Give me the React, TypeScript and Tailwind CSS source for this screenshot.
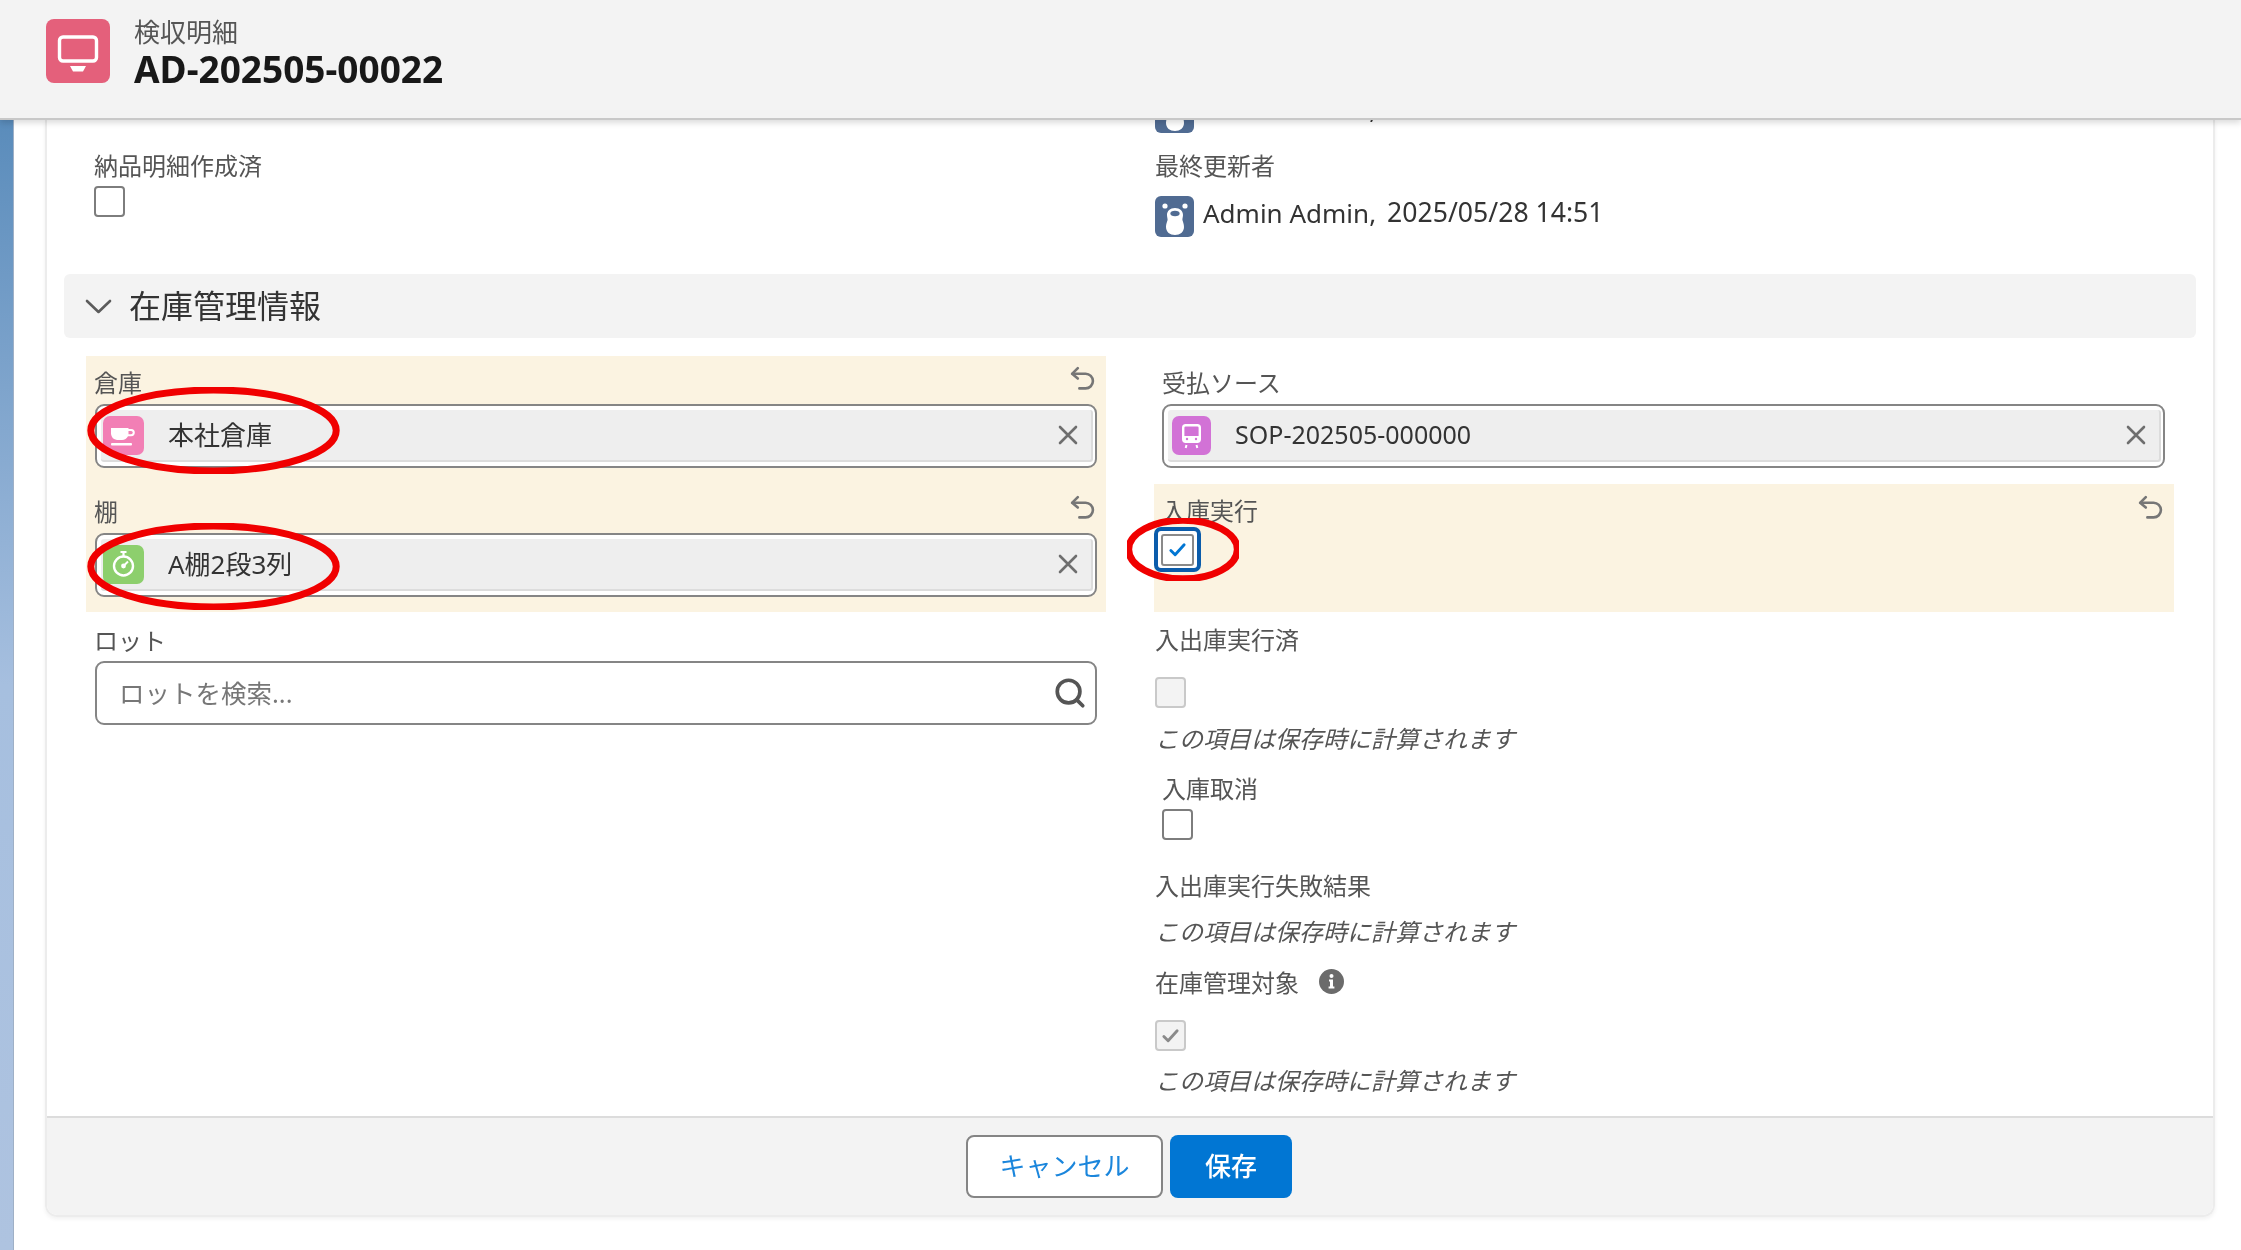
import React from "react";
import { Search } from "lucide-react";

const UndoIcon = () => (
  <svg viewBox="0 0 24 24" className="w-[25px] h-[25px]" fill="none" stroke="#767676" strokeWidth="2.5" strokeLinecap="round" strokeLinejoin="round">
    <path d="M7.5 2 2 7.5 7.5 12" />
    <path d="M2.5 7.5H15a6.5 6.5 0 0 1 0 14H9" />
  </svg>
);

const ClearIcon = () => (
  <svg viewBox="0 0 20 20" className="w-[20px] h-[20px] shrink-0" fill="none" stroke="#6e6e6e" strokeWidth="2.6" strokeLinecap="round">
    <path d="M2 2 18 18M18 2 2 18" />
  </svg>
);

const CupIcon = () => (
  <svg viewBox="0 0 41 39" className="w-[41px] h-[39px] shrink-0">
    <rect width="41" height="39" rx="7" fill="#f27fb5" />
    <path d="M8 12h17.5v1h2.7a3.6 3.6 0 0 1 0 7.2H25A7 7 0 0 1 19 24h-5a7 7 0 0 1-6-6Z" fill="#fff" />
    <path d="M25.5 15v3.2h2.6a1.6 1.6 0 0 0 0-3.2Z" fill="#f27fb5" />
    <rect x="8" y="27" width="21" height="2.4" rx="1" fill="#fff" />
  </svg>
);

const TimerIcon = () => (
  <svg viewBox="0 0 41 39" className="w-[41px] h-[39px] shrink-0">
    <rect width="41" height="39" rx="7" fill="#8dcf6d" />
    <circle cx="20.5" cy="21" r="9.5" fill="none" stroke="#fff" strokeWidth="2.4" />
    <circle cx="20.5" cy="21" r="2.4" fill="#fff" />
    <path d="M20.5 21 25 16.5" stroke="#fff" strokeWidth="2" />
    <path d="M20.5 7v4M17.5 7h6" stroke="#fff" strokeWidth="2.2" />
  </svg>
);

const TrainIcon = () => (
  <svg viewBox="0 0 39 39" className="ml-[2px] w-[39px] h-[39px] shrink-0">
    <rect width="39" height="39" rx="7" fill="#d272d6" />
    <rect x="11.2" y="9.2" width="16.6" height="16.6" rx="2.5" fill="none" stroke="#fff" strokeWidth="2.4" />
    <rect x="11" y="20" width="17" height="6" fill="#fff" />
    <circle cx="15" cy="23" r="1.2" fill="#d272d6" />
    <circle cx="24" cy="23" r="1.2" fill="#d272d6" />
    <path d="M14.5 29l-.8 3M24.5 29l.8 3" stroke="#fff" strokeWidth="2" />
  </svg>
);

const BearIcon = () => (
  <svg viewBox="0 0 39 41" className="w-[39px] h-[41px] shrink-0">
    <rect width="39" height="41" rx="6" fill="#506b92" />
    <circle cx="10" cy="10" r="2.6" fill="#fff" />
    <circle cx="30" cy="10" r="2.6" fill="#fff" />
    <path d="M20 12c-5 0-8 3-8 7 0 2 .6 3 .6 5-.6 2-1.6 4-1.6 7 0 5 4 8 9 8s9-3 9-8c0-3-1-5-1.6-7 0-2 .6-3 .6-5 0-4-3-7-8-7Z" fill="#fff" />
    <ellipse cx="20" cy="17.5" rx="4.6" ry="2.8" fill="#506b92" />
  </svg>
);

const UserStamp = () => (
  <div className="flex items-center text-[#333] leading-none">
    <BearIcon />
    <span className="ml-[9px] mt-[-7px] text-[26px]">Admin Admin,</span>
    <span className="ml-[11px] mt-[-9px] text-[26.6px]">2025/05/28 14:51</span>
  </div>
);

const LookupInput = ({ icon, value, small }: { icon: React.ReactNode; value: string; small?: boolean }) => (
  <div className="h-[64px] rounded-[9px] border-2 border-[#858585] bg-white p-[4px] pr-[2px]">
    <div className="h-full flex items-center rounded-[3px] bg-[#eeeeee] border-b-2 border-r-2 border-[#dcdcdc] pl-[2px] pr-[13px]">
      {icon}
      <span className={small ? "ml-[24px] flex-1 text-[25px] text-[#333]" : "ml-[24px] flex-1 text-[26px] text-[#333]"}>{value}</span>
      <ClearIcon />
    </div>
  </div>
);

const CheckMark = ({ color }: { color: string }) => (
  <svg viewBox="0 0 20 20" className="w-[19px] h-[19px]" fill="none" stroke={color} strokeWidth="3" strokeLinecap="round" strokeLinejoin="round">
    <path d="M3 11l4.5 4.5L17 5" />
  </svg>
);

const Label = ({ children }: { children: React.ReactNode }) => (
  <div className="text-[24px] leading-[22px] pb-[2px] text-[#555]">{children}</div>
);

const CalcNote = () => (
  <div className="text-[24px] leading-[24px] italic text-[#555]">この項目は保存時に計算されます</div>
);

const Ellipse = ({ className }: { className: string }) => (
  <svg className={`absolute pointer-events-none ${className}`} viewBox="0 0 100 100" preserveAspectRatio="none">
    <ellipse cx="50" cy="50" rx="48.5" ry="46.5" fill="none" stroke="#f00000" strokeWidth="7" vectorEffect="non-scaling-stroke" />
  </svg>
);

export default function App() {
  return (
    <div className="relative w-[2241px] h-[1250px] flex flex-col overflow-hidden bg-white blur-[0.5px] font-['Noto_Sans','Noto_Sans_CJK_JP',sans-serif]">
      <header className="relative z-10 h-[120px] shrink-0 flex items-start bg-[#f3f3f3] border-b-2 border-[#c8c8c8] shadow-[0_3px_6px_rgba(0,0,0,0.14)] pl-[46px] pt-[19px]">
        <svg viewBox="0 0 64 64" className="w-[64px] h-[64px] shrink-0">
          <rect width="64" height="64" rx="8" fill="#e4607b" />
          <rect x="13.5" y="18" width="37" height="24" rx="3.5" fill="none" stroke="#fff" strokeWidth="3.4" />
          <path d="M24 47h16l-3 5.5H27Z" fill="#fff" />
        </svg>
        <div className="ml-[24px]">
          <div className="text-[26px] leading-[28px] mt-[-1px] text-[#555]">検収明細</div>
          <div className="text-[37px] leading-[40px] mt-[3px] font-bold text-[#181818]">AD-202505-00022</div>
        </div>
      </header>

      <div className="flex-1 flex min-h-0">
        <div className="w-[14px] shrink-0 border-r border-[#9fb0c6] bg-linear-to-b from-[#5a8cbb] via-[#a6bfdf] via-50% to-[#aec3e0]" />
        <div className="flex-1 flex pl-[31px] pr-[26px] pb-[33px]">
          <section className="flex-1 flex flex-col border-x-2 border-b-2 border-[#ececec] rounded-b-[12px] overflow-hidden shadow-[0_2px_4px_rgba(0,0,0,0.06)]">
            <div className="flex-1 min-h-0 overflow-hidden px-[17px]">
              <div className="mt-[-28px] grid grid-cols-2 gap-x-[48px] px-[22px]">
                <div />
                <div className="pl-[1px]">
                  <UserStamp />
                </div>
              </div>
              <div className="mt-[6px] grid grid-cols-2 gap-x-[48px] px-[22px]">
                <div className="pl-[8px] pt-[16px]">
                  <Label>納品明細作成済</Label>
                  <div className="mt-[7px] w-[31px] h-[31px] rounded-[4px] border-2 border-[#7d7d7d] bg-white" />
                </div>
                <div className="pl-[1px] pt-[16px]">
                  <Label>最終更新者</Label>
                  <div className="mt-[17px]">
                    <UserStamp />
                  </div>
                </div>
              </div>

              <div className="mt-[37px] h-[64px] flex items-center rounded-[6px] bg-[#f3f3f3] pl-[21px]">
                <svg viewBox="0 0 27 15" className="w-[27px] h-[15px]" fill="none" stroke="#5c5c5c" strokeWidth="2.6" strokeLinecap="round" strokeLinejoin="round">
                  <path d="M2 2 13.5 13 25 2" />
                </svg>
                <span className="ml-[17px] text-[32px] text-[#333]">在庫管理情報</span>
              </div>

              <div className="mt-[18px] grid grid-cols-2 gap-x-[48px] px-[22px]">
                <div>
                  <div className="bg-[#fbf3e1]">
                    <div className="relative h-[128px] pl-[8px] pr-[9px] pt-[16px]">
                      <div className="absolute right-[11px] top-[10px]"><UndoIcon /></div>
                      <Label>倉庫</Label>
                      <div className="mt-[8px] ml-[1px]">
                        <LookupInput icon={<CupIcon />} value="本社倉庫" />
                      </div>
                    </div>
                    <div className="relative h-[128px] pl-[8px] pr-[9px] pt-[17px]">
                      <div className="absolute right-[11px] top-[11px]"><UndoIcon /></div>
                      <Label>棚</Label>
                      <div className="mt-[8px] ml-[1px]">
                        <LookupInput icon={<TimerIcon />} value="A棚2段3列" />
                      </div>
                    </div>
                  </div>
                  <div className="pl-[8px] pr-[9px] pt-[18px]">
                    <Label>ロット</Label>
                    <div className="mt-[7px] ml-[1px] h-[64px] flex items-center rounded-[9px] border-2 border-[#858585] bg-white pl-[22px] pr-[8px]">
                      <span className="flex-1 text-[25.5px] text-[#777]">ロットを検索...</span>
                      <Search className="w-[34px] h-[34px] text-[#555]" strokeWidth={2.6} />
                    </div>
                  </div>
                </div>

                <div>
                  <div className="h-[128px] pl-[8px] pr-[9px] pt-[16px]">
                    <Label>受払ソース</Label>
                    <div className="mt-[8px]">
                      <LookupInput icon={<TrainIcon />} value="SOP-202505-000000" small />
                    </div>
                  </div>
                  <div className="relative h-[128px] bg-[#fbf3e1] pl-[8px] pt-[16px]">
                    <div className="absolute right-[11px] top-[11px]"><UndoIcon /></div>
                    <Label>入庫実行</Label>
                    <div className="absolute left-[0px] top-[43px] w-[47px] h-[45px] rounded-[7px] border-[4px] border-[#0b5cab] bg-white flex items-center justify-center">
                      <div className="w-[33px] h-[32px] rounded-[3px] border-2 border-[#8a8a8a] flex items-center justify-center">
                        <CheckMark color="#0176d3" />
                      </div>
                    </div>
                  </div>
                  <div className="pl-[1px] pt-[17px]">
                    <Label>入出庫実行済</Label>
                    <div className="mt-[24px] w-[31px] h-[31px] rounded-[4px] border-2 border-[#c9c9c9] bg-[#f3f3f3]" />
                    <div className="mt-[19px]"><CalcNote /></div>
                  </div>
                  <div className="pl-[8px] pt-[27px]">
                    <Label>入庫取消</Label>
                    <div className="mt-[7px] w-[31px] h-[31px] rounded-[4px] border-2 border-[#7d7d7d] bg-white" />
                  </div>
                  <div className="pl-[1px] pt-[35px]">
                    <Label>入出庫実行失敗結果</Label>
                    <div className="mt-[21px]"><CalcNote /></div>
                  </div>
                  <div className="pl-[1px] pt-[28px]">
                    <div className="flex items-center">
                      <Label>在庫管理対象</Label>
                      <svg viewBox="0 0 25 25" className="ml-[20px] mt-[-5px] w-[25px] h-[25px]">
                        <circle cx="12.5" cy="12.5" r="12.5" fill="#6b6b6b" />
                        <circle cx="12.5" cy="7" r="2" fill="#fff" />
                        <path d="M10 10.5h4v7h1.4v2h-5.8v-2H11v-5h-1Z" fill="#fff" />
                      </svg>
                    </div>
                    <div className="mt-[24px] w-[31px] h-[31px] rounded-[4px] border-2 border-[#c9c9c9] bg-[#f3f3f3] flex items-center justify-center">
                      <CheckMark color="#8a8a8a" />
                    </div>
                    <div className="mt-[18px]"><CalcNote /></div>
                  </div>
                </div>
              </div>
            </div>

            <footer className="h-[99px] shrink-0 flex items-start justify-center gap-[7px] bg-[#f3f3f3] border-t-2 border-[#dcdcdc] pt-[17px] pr-[2px]">
              <button className="w-[197px] h-[63px] rounded-[8px] border-2 border-[#858585] bg-white text-[26px] text-[#1b86dc]">キャンセル</button>
              <button className="w-[122px] h-[63px] rounded-[8px] bg-[#0176d3] text-[26px] font-medium text-white">保存</button>
            </footer>
          </section>
        </div>
      </div>

      <Ellipse className="left-[87px] top-[387px] w-[253px] h-[87px]" />
      <Ellipse className="left-[87px] top-[523px] w-[253px] h-[87px]" />
      <Ellipse className="left-[1127px] top-[518px] w-[112px] h-[63px]" />
    </div>
  );
}
